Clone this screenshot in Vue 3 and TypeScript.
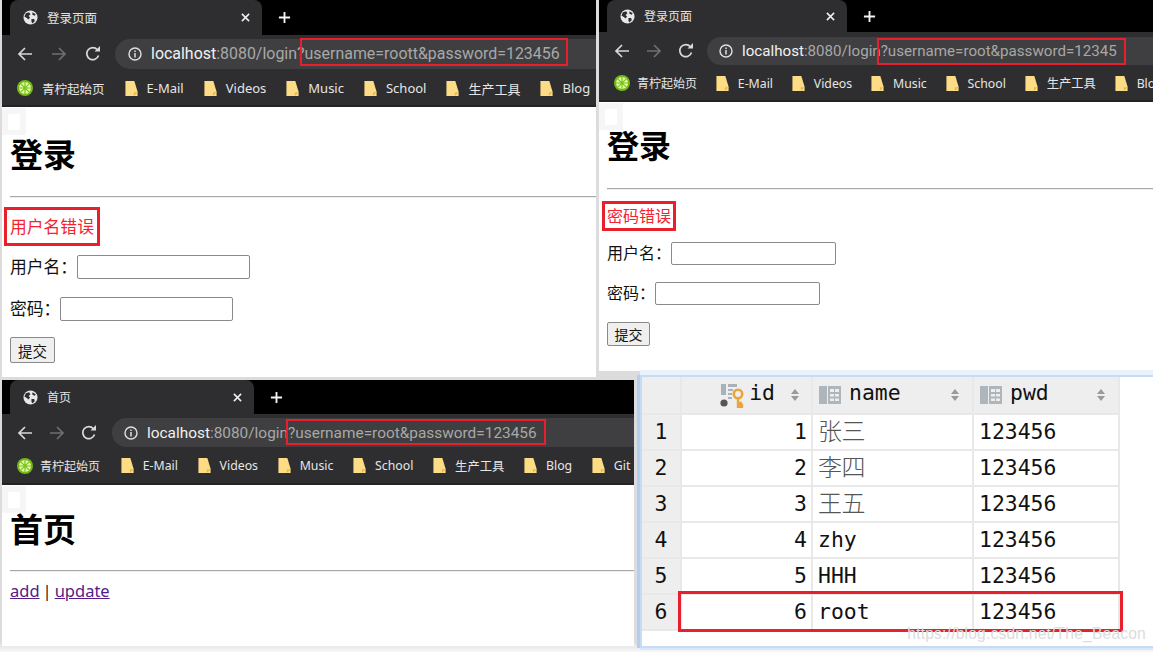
<script setup lang="ts">
interface BrowserWin {
  cls: string
  title: string
  query: string
  heading: string
  error: string
  bookmarks: string[]
}
const wins: BrowserWin[] = [
  { cls: 'w1', title: '登录页面', query: '?username=roott&password=123456', heading: '登录', error: '用户名错误', bookmarks: ['E-Mail', 'Videos', 'Music', 'School', '生产工具', 'Blog'] },
  { cls: 'w2', title: '登录页面', query: '?username=root&password=12345', heading: '登录', error: '密码错误', bookmarks: ['E-Mail', 'Videos', 'Music', 'School', '生产工具', 'Blo'] },
  { cls: 'w3', title: '首页', query: '?username=root&password=123456', heading: '首页', error: '', bookmarks: ['E-Mail', 'Videos', 'Music', 'School', '生产工具', 'Blog', 'Git'] },
]
const rows: [number, string, string][] = [
  [1, '张三', '123456'],
  [2, '李四', '123456'],
  [3, '王五', '123456'],
  [4, 'zhy', '123456'],
  [5, 'HHH', '123456'],
  [6, 'root', '123456'],
]
const cols = ['name', 'pwd']
</script>

<template>
  <div class="desk">
    <section v-for="w in wins" :key="w.cls" class="win" :class="w.cls">
      <div class="strip">
        <div class="tab">
          <svg class="globe" viewBox="0 0 16 16"><circle cx="8" cy="8" r="7.5" fill="#e8e8e8" /><path d="M3 3.5 6.5 2.5 8 4.5 6 6.5 7.5 8 6 10 4 8.5 1.5 7ZM9 9.5 12 9.5 12.5 12 10 14.5 9 12.5ZM10 2.5 13.5 4.5 12.5 6 10 5Z" fill="#2f2f31" /></svg>
          <span class="tab-title">{{ w.title }}</span>
          <svg class="close" viewBox="0 0 10 10"><path d="M1 1 9 9M9 1 1 9" stroke="#f0f0f0" stroke-width="1.7" /></svg>
        </div>
        <svg class="plus" viewBox="0 0 14 14"><path d="M7 1V13M1 7H13" stroke="#f4f4f4" stroke-width="2" /></svg>
      </div>
      <div class="toolbar">
        <svg class="nav" viewBox="0 0 16 16"><path d="M15 8H2M8 2 2 8 8 14" fill="none" stroke="#d8d8d8" stroke-width="1.7" /></svg>
        <svg class="nav" viewBox="0 0 16 16"><path d="M1 8H14M8 2 14 8 8 14" fill="none" stroke="#6f6f6f" stroke-width="1.7" /></svg>
        <svg class="nav" viewBox="0 0 16 16"><path d="M13.5 9.5A6 6 0 1 1 12.4 3.8" fill="none" stroke="#d8d8d8" stroke-width="1.7" /><path d="M9.5 5.5H15V0Z" fill="#d8d8d8" /></svg>
        <div class="pill">
          <svg class="info" viewBox="0 0 14 14"><circle cx="7" cy="7" r="6" fill="none" stroke="#e0e0e0" stroke-width="1.4" /><path d="M7 6V10.5M7 3.5V5" stroke="#e0e0e0" stroke-width="1.5" /></svg>
          <span class="url"><b>localhost</b>:8080/login{{ w.query }}</span>
        </div>
        <div class="mark"></div>
      </div>
      <div class="bookmarks">
        <div class="bm first">
          <svg class="lime" viewBox="0 0 16 16"><circle cx="8" cy="8" r="8" fill="#6fbb14" /><circle cx="8" cy="8" r="6" fill="#e6f7a8" /><path d="M8 2V14M2 8H14M3.8 3.8 12.2 12.2M12.2 3.8 3.8 12.2" stroke="#76c31a" stroke-width="1.2" /></svg>
          <span>青柠起始页</span>
        </div>
        <div v-for="b in w.bookmarks" :key="b" class="bm">
          <svg class="folder" viewBox="0 0 13 16"><path d="M0 0H9.5L13 11.5V16H0Z" fill="#fcdc85" /><path d="M9 16V12H13Z" fill="#e8b94e" /></svg>
          <span>{{ b }}</span>
        </div>
      </div>
      <div class="page">
        <div class="ghost"><i></i></div>
        <h1>{{ w.heading }}</h1>
        <hr />
        <template v-if="w.error">
          <p class="error"><span>{{ w.error }}</span></p>
          <div class="field"><label>用户名：</label><input type="text" /></div>
          <div class="field"><label>密码：</label><input type="text" /></div>
          <button type="button">提交</button>
        </template>
        <p v-else class="links"><a href="#">add</a> | <a href="#">update</a></p>
      </div>
    </section>

    <section class="dbwin">
      <table>
        <thead>
          <tr>
            <th class="rowhead"></th>
            <th class="idh">
              <div class="hcell right">
                <svg class="keyicon" viewBox="0 0 26 26">
                  <path d="M2 2H7V13H2ZM9 2H18V5H9ZM9 7H14V9H9ZM9 11H13V13H9ZM9 15H13V17H9Z" fill="#a9b2b9" />
                  <circle cx="5" cy="21" r="3.6" fill="#555" />
                  <circle cx="19" cy="12" r="4.2" fill="none" stroke="#e9a53a" stroke-width="2.6" />
                  <path d="M19 16V25H23V23H21V21H23" fill="none" stroke="#e9a53a" stroke-width="2.4" />
                </svg>
                <span>id</span>
                <svg class="sort" viewBox="0 0 8 12"><path d="M4 0 8 5H0ZM4 12 0 7H8Z" fill="#9a9a9a" /></svg>
              </div>
            </th>
            <th v-for="c in cols" :key="c">
              <div class="hcell">
                <svg class="tblicon" viewBox="0 0 22 18"><path d="M0 0H8V18H0Z" fill="#aeb6bc" /><path d="M9 0H22V18H9ZM11 3V6H15V3ZM16 3V6H20V3ZM11 8V10.5H15V8ZM16 8V10.5H20V8ZM11 12.5V15H15V12.5ZM16 12.5V15H20V12.5Z" fill="#aeb6bc" fill-rule="evenodd" /></svg>
                <span>{{ c }}</span>
                <svg class="sort push" viewBox="0 0 8 12"><path d="M4 0 8 5H0ZM4 12 0 7H8Z" fill="#9a9a9a" /></svg>
              </div>
            </th>
          </tr>
        </thead>
        <tbody>
          <tr v-for="r in rows" :key="r[0]">
            <td class="rowhead">{{ r[0] }}</td>
            <td class="num">{{ r[0] }}</td>
            <td :class="{ cjk: r[0] < 4 }">{{ r[1] }}</td>
            <td>{{ r[2] }}</td>
          </tr>
        </tbody>
      </table>
      <div class="rowmark"></div>
      <div class="watermark">https://blog.csdn.net/The_Beacon</div>
    </section>
  </div>
</template>

<style scoped>
.desk {
  position: relative;
  width: 1153px;
  height: 652px;
  overflow: hidden;
  background: linear-gradient(#dcdcdc 0, #dcdcdc 642px, #f6f6f6 651px);
  font-family: "Noto Sans", "Noto Sans CJK SC", sans-serif;
}
.win {
  position: absolute;
  display: flex;
  flex-direction: column;
  overflow: hidden;
  background: #fff;
}
.w1 {
  left: 2px; top: 0; width: 594px; height: 377px;
  --strip: 35px; --tool: 37px; --bm: 35px; --tabl: 8px; --tabw: 252px;
  --pilll: 113px; --pillh: 30px; --urlf: 15.95px; --infol: 13px;
  --navgap: 18px; --bmgap: 20px; --bmf: 13px; --firstl: 15px; --bmt: 9px; --firstf: 12.5px; --firstm: 0px; --bmpad: 1px;
  --mleft: 298px; --mtop: 3px; --mw: 268px; --mh: 28px;
  --tabf: 12.5px;
}
.w2 {
  left: 599px; top: 0; width: 554px; height: 371px;
  --strip: 32px; --tool: 37px; --bm: 33px; --tabl: 8px; --tabw: 240px;
  --pilll: 108px; --pillh: 28px; --urlf: 15.15px; --infol: 12px;
  --navgap: 16px; --bmgap: 18.8px; --bmf: 12.3px; --firstl: 15px; --bmt: 7px; --firstf: 12px; --firstm: 0px; --bmpad: 3px;
  --mleft: 278px; --mtop: 6px; --mw: 249px; --mh: 27px;
  --tabf: 12px;
}
.w3 {
  left: 2px; top: 380px; width: 632px; height: 266px;
  --strip: 34px; --tool: 37px; --bm: 34px; --tabl: 8px; --tabw: 244px;
  --pilll: 110px; --pillh: 29px; --urlf: 15.4px; --infol: 12px;
  --navgap: 16px; --bmgap: 19.7px; --bmf: 12.3px; --firstl: 15px; --bmt: 7px; --firstf: 12px; --firstm: 1px; --bmpad: 3px;
  --mleft: 284px; --mtop: 5px; --mw: 260px; --mh: 26px;
  --tabf: 12px;
}
.strip {
  height: var(--strip);
  flex: none;
  display: flex;
  align-items: center;
  background: #000;
  padding-left: var(--tabl);
}
.tab {
  width: var(--tabw);
  height: 100%;
  display: flex;
  align-items: center;
  padding: 0 12px 0 13px;
  box-sizing: border-box;
  background: #2e2e30;
  border-radius: 8px 8px 0 0;
}
.globe { width: 15px; height: 15px; flex: none; }
.tab-title {
  margin-left: 9px;
  color: #e4e4e4;
  font-size: var(--tabf);
}
.close { width: 9px; height: 9px; margin-left: auto; }
.plus { width: 13px; height: 13px; margin-left: 16px; }
.toolbar {
  position: relative;
  height: var(--tool);
  flex: none;
  display: flex;
  align-items: center;
  padding-left: 15px;
  gap: var(--navgap);
  background: #2e2e30;
}
.nav { width: 16px; height: 16px; flex: none; }
.pill {
  position: absolute;
  left: var(--pilll);
  right: 0;
  height: var(--pillh);
  display: flex;
  align-items: center;
  border-radius: 15px 0 0 15px;
  background: #3f3f41;
  padding-left: var(--infol);
}
.info { width: 14px; height: 14px; flex: none; }
.url {
  margin-left: 9px;
  color: #a8a8a8;
  font-family: "Roboto", "Liberation Sans", sans-serif;
  font-size: var(--urlf);
  white-space: nowrap;
}
.url b { color: #f1f1f1; font-weight: 400; }
.mark {
  position: absolute;
  left: var(--mleft);
  top: var(--mtop);
  width: var(--mw);
  height: var(--mh);
  box-sizing: border-box;
  border: 2px solid #e8202e;
}
.bookmarks {
  height: var(--bm);
  flex: none;
  display: flex;
  align-items: center;
  gap: var(--bmgap);
  padding-left: var(--firstl);
  padding-bottom: var(--bmpad);
  background: #2e2e30;
  border-bottom: 2px solid #232323;
  box-sizing: border-box;
  color: #e6e6e6;
  font-size: var(--bmf);
  white-space: nowrap;
}
.bm { display: flex; align-items: center; gap: 9px; }
.bm.first { gap: var(--bmt); margin-right: var(--firstm); font-size: var(--firstf); }
.lime { width: 16px; height: 16px; flex: none; }
.folder { width: 13px; height: 15px; flex: none; }
.page {
  position: relative;
  flex: 1;
  padding: 30px 0 0 8px;
  color: #111;
  font-size: 16.8px;
}
.ghost {
  position: absolute;
  left: 0; top: 1px;
  width: 24px; height: 27px;
  display: flex;
  align-items: center;
  justify-content: center;
  background: #f6f6f6;
}
.ghost i { display: block; width: 12px; height: 16px; background: #fff; }
h1 {
  margin: 0;
  font-size: 33px;
  line-height: 36px;
  font-weight: 700;
  color: #000;
}
hr {
  margin: 23px 0 0;
  border: 0;
  border-top: 1px solid #a8a8a8;
  border-bottom: 1px solid #eee;
}
.error { margin: 9px 0 0 -6px; }
.error span {
  display: inline-block;
  padding: 3px 3px;
  border: 3px solid #e8202e;
  color: #f52330;
  font-size: 16.8px;
  line-height: 27px;
}
.field {
  display: flex;
  align-items: center;
  margin-top: 9px;
  height: 24px;
}
.field + .field { margin-top: 18px; }
label { white-space: nowrap; margin-bottom: 3px; }
input {
  width: 173px;
  height: 24px;
  box-sizing: border-box;
  margin: 0;
  border: 1px solid #8a8a8a;
  border-radius: 2px;
  background: #fff;
}
button {
  display: block;
  width: 45px;
  height: 26px;
  margin-top: 16px;
  padding: 0;
  border: 1px solid #8a8a8a;
  border-radius: 2px;
  background: #efefef;
  color: #111;
  font: inherit;
  font-size: 14.5px;
}
.w2 .page { padding-top: 27px; font-size: 16px; padding-left: 8px; }
.w2 h1 { font-size: 32px; line-height: 34px; }
.w2 hr { margin-top: 25px; }
.w2 .error { margin: 11px 0 0 -5px; }
.w2 .error span { font-size: 16px; line-height: 22px; padding: 1px 2px; }
.w2 input { width: 165px; height: 23px; }
.w2 .field { margin-top: 11px; height: 23px; }
.w2 .field + .field { margin-top: 17px; }
.w2 button { width: 43px; height: 24px; margin-top: 17px; font-size: 14px; }
.w3 .page { padding-top: 27px; }
.w3 hr { margin-top: 22px; }
.links {
  margin: 8px 0 0;
  font-size: 16.5px;
  line-height: 22px;
  color: #222;
  word-spacing: -1.3px;
}
.links a { color: #551a8b; }

.dbwin {
  position: absolute;
  left: 640px;
  top: 375px;
  width: 513px;
  height: 273px;
  box-sizing: border-box;
  background: #fff;
  border: 2px solid #c6dbf4;
  border-right: 0;
  font-family: "DejaVu Sans Mono", "Noto Sans CJK SC", monospace;
  font-size: 21.4px;
  color: #111;
  box-shadow: 0 -5px 0 #e9f2fb, -3px 0 0 #b3cff0, 0 2px 0 #d8e7f8;
}
table {
  border-collapse: separate;
  border-spacing: 0;
  table-layout: fixed;
  width: 478px;
}
th, td {
  box-sizing: border-box;
  padding: 0 5px;
  border-right: 2px solid #e8e8e8;
  border-bottom: 2px solid #e8e8e8;
  font-weight: 400;
  text-align: left;
  white-space: nowrap;
}
th {
  height: 38px;
  background: #eee;
  vertical-align: middle;
}
th:nth-child(1) { width: 40px; }
th:nth-child(2) { width: 131px; }
th:nth-child(3) { width: 161px; }
th:nth-child(4) { width: 146px; }
td { height: 36px; line-height: 1; }
.rowhead { background: #eee; text-align: center; padding: 0; }
.num { text-align: right; padding-right: 4px; }
.cjk { color: #555; font-weight: 300; font-size: 24px; letter-spacing: -0.5px; }
.hcell { display: flex; align-items: center; gap: 8px; }
.hcell span { position: relative; top: -3px; }
.right { justify-content: flex-end; gap: 4px; padding-right: 7px; }
.keyicon { width: 26px; height: 26px; flex: none; }
.tblicon { width: 22px; height: 18px; flex: none; margin-left: 1px; }
.sort { width: 8px; height: 12px; flex: none; margin-left: 12px; }
.push { margin-left: auto; margin-right: 8px; }
.rowmark {
  position: absolute;
  left: 36px;
  top: 214px;
  width: 445px;
  height: 41px;
  box-sizing: border-box;
  border: 3.5px solid #e8202e;
}
.watermark {
  position: absolute;
  right: 7px;
  bottom: 3px;
  font-family: "Liberation Sans", sans-serif;
  font-size: 15.6px;
  color: #dcdcdc;
  letter-spacing: 0.2px;
}
</style>
